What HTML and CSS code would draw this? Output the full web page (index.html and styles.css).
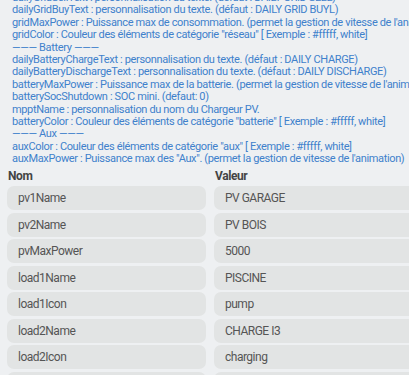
FILE: index.html
```html
<!DOCTYPE html>
<html lang="fr">
<head>
    <meta charset="UTF-8">
    <meta name="viewport" content="width=device-width, initial-scale=1.0">
    <title>Configuration</title>
    <link rel="stylesheet" href="styles.css">
</head>
<body>
    <!-- Help text -->
    <div class="help">
        <p>dailyGridSellText : personnalisation du texte. (défaut : DAILY GRID SELL)</p>
        <p>dailyGridBuyText : personnalisation du texte. (défaut : DAILY GRID BUYL)</p>
        <p>gridMaxPower : Puissance max de consommation. (permet la gestion de vitesse de l'animation)</p>
        <p>gridColor : Couleur des éléments de catégorie "réseau" [ Exemple : #fffff, white]</p>
        <p>——— Battery ———</p>
        <p>dailyBatteryChargeText : personnalisation du texte. (défaut : DAILY CHARGE)</p>
        <p>dailyBatteryDischargeText : personnalisation du texte. (défaut : DAILY DISCHARGE)</p>
        <p>batteryMaxPower : Puissance max de la batterie. (permet la gestion de vitesse de l'animation)</p>
        <p>batterySocShutdown : SOC mini. (defaut: 0)</p>
        <p>mpptName : personnalisation du nom du Chargeur PV.</p>
        <p>batteryColor : Couleur des éléments de catégorie "batterie" [ Exemple : #fffff, white]</p>
        <p>——— Aux ———</p>
        <p>auxColor : Couleur des éléments de catégorie "aux" [ Exemple : #fffff, white]</p>
        <p>auxMaxPower : Puissance max des "Aux". (permet la gestion de vitesse de l'animation)</p>
    </div>

    <!-- Key / value table -->
    <div class="table">
        <div class="head">Nom</div>
        <div class="head">Valeur</div>

        <div class="cell">pv1Name</div>
        <div class="cell">PV GARAGE</div>
        <div class="cell">pv2Name</div>
        <div class="cell">PV BOIS</div>
        <div class="cell">pvMaxPower</div>
        <div class="cell">5000</div>
        <div class="cell">load1Name</div>
        <div class="cell">PISCINE</div>
        <div class="cell">load1Icon</div>
        <div class="cell">pump</div>
        <div class="cell">load2Name</div>
        <div class="cell">CHARGE I3</div>
        <div class="cell">load2Icon</div>
        <div class="cell">charging</div>
        <div class="cell"></div>
        <div class="cell"></div>
    </div>
</body>
</html>
```

FILE: styles.css
```css
body {
    margin: 0;
    padding: 0;
    background-color: #eef0f2;
    font-family: Roboto, "Liberation Sans", sans-serif;
    overflow: hidden;
    height: 375px;
}
.help {
    margin-top: -8px;
    padding-left: 12px;
    color: #4081cc;
    font-size: 11px;
    letter-spacing: -0.35px;
    line-height: 12.4px;
    white-space: nowrap;
    overflow: hidden;
}
.help p {
    margin: 0;
}
.table {
    display: grid;
    grid-template-columns: 199px 195px;
    column-gap: 8px;
    row-gap: 2.5px;
    padding: 0 0 0 7px;
    margin-top: 3px;
}
.head {
    font-weight: bold;
    font-size: 12px;
    letter-spacing: -0.4px;
    color: #444;
    padding-left: 1px;
    height: 14px;
    line-height: 14px;
    margin-bottom: 1px;
}
.cell {
    background-color: #e2e4e4;
    border-radius: 7px 0 0 7px;
    height: 24px;
    line-height: 24px;
    padding-left: 11px;
    font-size: 12px;
    letter-spacing: -0.5px;
    color: #555;
    box-sizing: border-box;
}
.cell:nth-child(odd) {
    border-radius: 7px;
}
```
